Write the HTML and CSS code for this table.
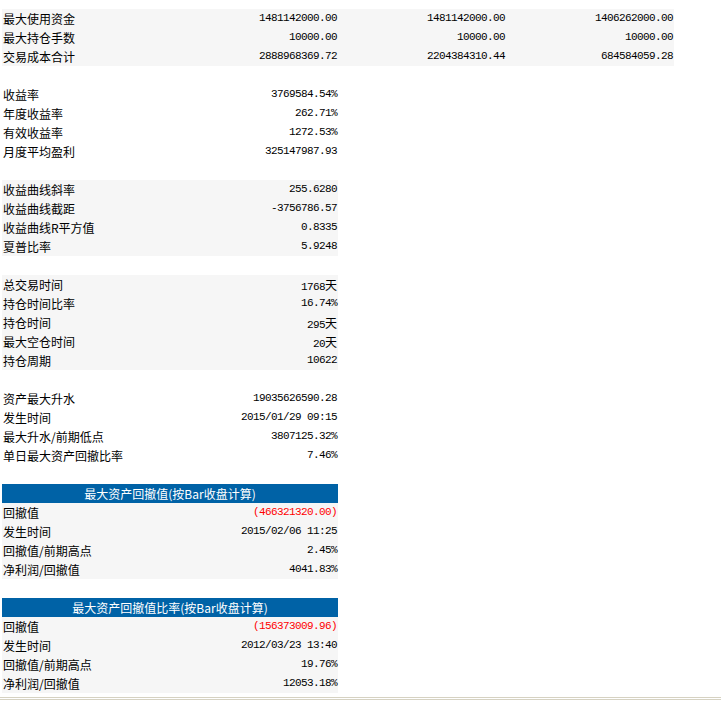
FILE: index.html
```html
<!DOCTYPE html>
<html lang="zh">
<head>
<meta charset="utf-8">
<link rel="stylesheet" href="styles.css">
</head>
<body>
<div class="page">
  <div class="block wide">
    <div class="row gray"><span class="label">最大使用资金</span><span class="val">1481142000.00</span><span class="val">1481142000.00</span><span class="val">1406262000.00</span></div>
    <div class="row gray"><span class="label">最大持仓手数</span><span class="val">10000.00</span><span class="val">10000.00</span><span class="val">10000.00</span></div>
    <div class="row gray"><span class="label">交易成本合计</span><span class="val">2888968369.72</span><span class="val">2204384310.44</span><span class="val">684584059.28</span></div>
  </div>

  <div class="block">
    <div class="row"><span class="label">收益率</span><span class="val">3769584.54%</span></div>
    <div class="row"><span class="label">年度收益率</span><span class="val">262.71%</span></div>
    <div class="row"><span class="label">有效收益率</span><span class="val">1272.53%</span></div>
    <div class="row"><span class="label">月度平均盈利</span><span class="val">325147987.93</span></div>
  </div>

  <div class="block">
    <div class="row gray"><span class="label">收益曲线斜率</span><span class="val">255.6280</span></div>
    <div class="row gray"><span class="label">收益曲线截距</span><span class="val">-3756786.57</span></div>
    <div class="row gray"><span class="label">收益曲线R平方值</span><span class="val">0.8335</span></div>
    <div class="row gray"><span class="label">夏普比率</span><span class="val">5.9248</span></div>
  </div>

  <div class="block">
    <div class="row gray"><span class="label">总交易时间</span><span class="val">1768<span class="u">天</span></span></div>
    <div class="row gray"><span class="label">持仓时间比率</span><span class="val">16.74%</span></div>
    <div class="row gray"><span class="label">持仓时间</span><span class="val">295<span class="u">天</span></span></div>
    <div class="row gray"><span class="label">最大空仓时间</span><span class="val">20<span class="u">天</span></span></div>
    <div class="row gray"><span class="label">持仓周期</span><span class="val">10622</span></div>
  </div>

  <div class="block">
    <div class="row"><span class="label">资产最大升水</span><span class="val">19035626590.28</span></div>
    <div class="row"><span class="label">发生时间</span><span class="val">2015/01/29 09:15</span></div>
    <div class="row"><span class="label">最大升水/前期低点</span><span class="val">3807125.32%</span></div>
    <div class="row"><span class="label">单日最大资产回撤比率</span><span class="val">7.46%</span></div>
  </div>

  <div class="block">
    <div class="head">最大资产回撤值(按Bar收盘计算)</div>
    <div class="row gray"><span class="label">回撤值</span><span class="val neg">(466321320.00)</span></div>
    <div class="row gray"><span class="label">发生时间</span><span class="val">2015/02/06 11:25</span></div>
    <div class="row gray"><span class="label">回撤值/前期高点</span><span class="val">2.45%</span></div>
    <div class="row gray"><span class="label">净利润/回撤值</span><span class="val">4041.83%</span></div>
  </div>

  <div class="block last">
    <div class="head">最大资产回撤值比率(按Bar收盘计算)</div>
    <div class="row gray"><span class="label">回撤值</span><span class="val neg">(156373009.96)</span></div>
    <div class="row gray"><span class="label">发生时间</span><span class="val">2012/03/23 13:40</span></div>
    <div class="row gray"><span class="label">回撤值/前期高点</span><span class="val">19.76%</span></div>
    <div class="row gray"><span class="label">净利润/回撤值</span><span class="val">12053.18%</span></div>
  </div>
</div>
<div class="frame-edge"></div>
</body>
</html>
```

FILE: styles.css
```css
html, body {
  margin: 0;
  padding: 0;
  background: #ffffff;
}

body {
  font-family: "Noto Sans CJK SC", "Liberation Sans", sans-serif;
  font-size: 12px;
  color: #000000;
  width: 721px;
  height: 701px;
  overflow: hidden;
}

.page {
  padding: 9px 0 0 2px;
}

.block {
  width: 336px;
  margin-bottom: 19px;
}

.block.wide {
  width: 672px;
}

.block.last {
  margin-bottom: 0;
}

.row {
  display: grid;
  grid-template-columns: 168px 168px;
  height: 19px;
  line-height: 19px;
}

.wide .row {
  grid-template-columns: 168px 168px 168px 168px;
}

.row.gray {
  background: #f6f6f6;
}

.label {
  padding-left: 1px;
  white-space: nowrap;
  font-family: "Noto Sans CJK SC", sans-serif;
  font-size: 12px;
}

.val {
  text-align: right;
  white-space: nowrap;
  padding-right: 1px;
  font-family: "Liberation Mono", "Noto Sans CJK SC", monospace;
  font-size: 11px;
  letter-spacing: -0.6px;
}

.val .u {
  font-family: "Noto Sans CJK SC", sans-serif;
  font-size: 12px;
  letter-spacing: 0;
}

.val.neg {
  color: #ff0000;
}

.head {
  height: 19px;
  line-height: 19px;
  background: #0062a6;
  color: #ffffff;
  text-align: center;
  font-size: 12px;
  white-space: nowrap;
}

.frame-edge {
  margin-top: 4px;
  height: 1px;
  border-top: 1px solid #d6d2c2;
  border-bottom: 1px solid #d6d2c2;
}
```
